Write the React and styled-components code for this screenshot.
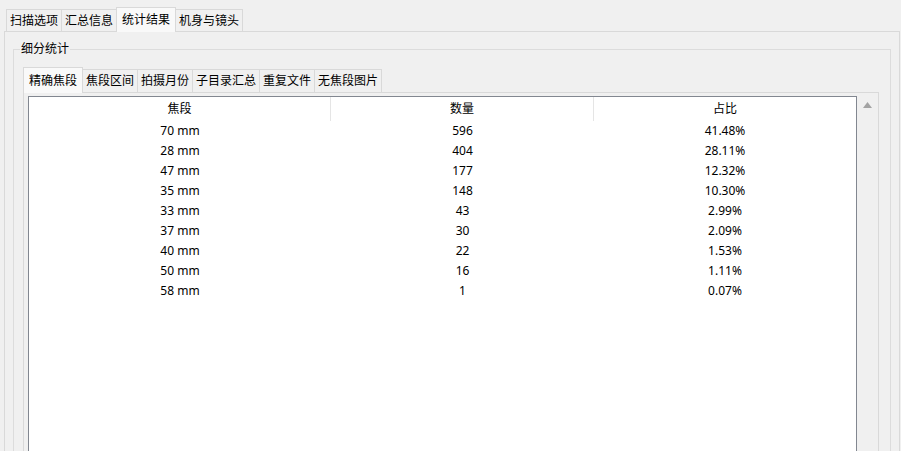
import React from "react";
import styled, { createGlobalStyle } from "styled-components";

const Global = createGlobalStyle`
  html, body { margin: 0; padding: 0; background: #f0f0f0; }
  body { font-family: "Noto Sans", "Noto Sans CJK SC", sans-serif; font-size: 12px; color: #000; }
  * { box-sizing: border-box; }
`;

const Root = styled.div`
  width: 901px;
  height: 451px;
  overflow: hidden;
  padding-top: 7px;
  display: flex;
  flex-direction: column;
`;

const TabBar = styled.div`
  display: flex;
  align-items: flex-end;
  height: ${(p) => (p.$inner ? 25 : 24)}px;
  padding-left: ${(p) => (p.$inner ? 0 : 6)}px;
  position: relative;
  z-index: 1;
`;

const Tab = styled.div`
  height: ${(p) =>
    p.$active ? (p.$inner ? 26 : 25) : p.$inner ? 23 : 22}px;
  margin-bottom: ${(p) => (p.$active ? -1 : 0)}px;
  margin-left: ${(p) => (p.$first ? 0 : -1)}px;
  padding: 0 ${(p) => (p.$active ? 5 : 3)}px;
  border: 1px solid #d9d9d9;
  border-bottom: none;
  background: ${(p) => (p.$active ? "#f9f9f9" : "#f0f0f0")};
  display: flex;
  align-items: center;
  white-space: nowrap;
  line-height: 14px;
  position: relative;
  z-index: ${(p) => (p.$active ? 2 : 1)};
`;

const OuterPane = styled.div`
  flex: 1;
  margin: 0 1px 0 4px;
  border: 1px solid #d9d9d9;
  background: #f0f0f0;
  padding: 0 8px;
  display: flex;
  flex-direction: column;
`;

const Group = styled.fieldset`
  margin: 9px 0 0 0;
  padding: 10px 11px 0 9px;
  border: 1px solid #dcdcdc;
  min-width: 0;
  flex: 1;
  display: flex;
  flex-direction: column;
`;

const GroupTitle = styled.legend`
  margin-left: -3px;
  padding: 0 1px;
  line-height: 16px;
`;

const InnerPane = styled.div`
  border: 1px solid #d9d9d9;
  background: #f0f0f0;
  padding: 3px 0 0 4px;
  display: flex;
  height: 420px;
`;

const Table = styled.div`
  flex: 1;
  background: #fff;
  border: 1px solid #828790;
  border-bottom: none;
  display: flex;
  flex-direction: column;
`;

const Row = styled.div`
  display: grid;
  grid-template-columns: 302px 263px 1fr;
  height: ${(p) => (p.$header ? 24 : 20)}px;
`;

const Cell = styled.div`
  display: flex;
  align-items: center;
  justify-content: center;
  line-height: 14px;
  border-right: ${(p) => (p.$sep ? "1px solid #e5e5e5" : "none")};
`;

const ScrollCol = styled.div`
  width: 21px;
  display: flex;
  justify-content: center;
  padding-top: 6px;
`;

const tabsOuter = ["扫描选项", "汇总信息", "统计结果", "机身与镜头"];
const tabsInner = ["精确焦段", "焦段区间", "拍摄月份", "子目录汇总", "重复文件", "无焦段图片"];

const rows = [
  ["70 mm", "596", "41.48%"],
  ["28 mm", "404", "28.11%"],
  ["47 mm", "177", "12.32%"],
  ["35 mm", "148", "10.30%"],
  ["33 mm", "43", "2.99%"],
  ["37 mm", "30", "2.09%"],
  ["40 mm", "22", "1.53%"],
  ["50 mm", "16", "1.11%"],
  ["58 mm", "1", "0.07%"],
];

export default function App() {
  return (
    <>
      <Global />
      <Root>
        <TabBar>
          {tabsOuter.map((t, i) => (
            <Tab key={t} $first={i === 0} $active={i === 2}>
              {t}
            </Tab>
          ))}
        </TabBar>
        <OuterPane>
          <Group>
            <GroupTitle>细分统计</GroupTitle>
            <TabBar $inner>
              {tabsInner.map((t, i) => (
                <Tab key={t} $inner $first={i === 0} $active={i === 0}>
                  {t}
                </Tab>
              ))}
            </TabBar>
            <InnerPane>
              <Table>
                <Row $header>
                  <Cell $sep>焦段</Cell>
                  <Cell $sep>数量</Cell>
                  <Cell>占比</Cell>
                </Row>
                {rows.map((r) => (
                  <Row key={r[0]}>
                    <Cell>{r[0]}</Cell>
                    <Cell>{r[1]}</Cell>
                    <Cell>{r[2]}</Cell>
                  </Row>
                ))}
              </Table>
              <ScrollCol>
                <svg width="9" height="6" viewBox="0 0 9 6">
                  <path d="M4.5 0 L9 6 L0 6 Z" fill="#a3a3a3" />
                </svg>
              </ScrollCol>
            </InnerPane>
          </Group>
        </OuterPane>
      </Root>
    </>
  );
}
